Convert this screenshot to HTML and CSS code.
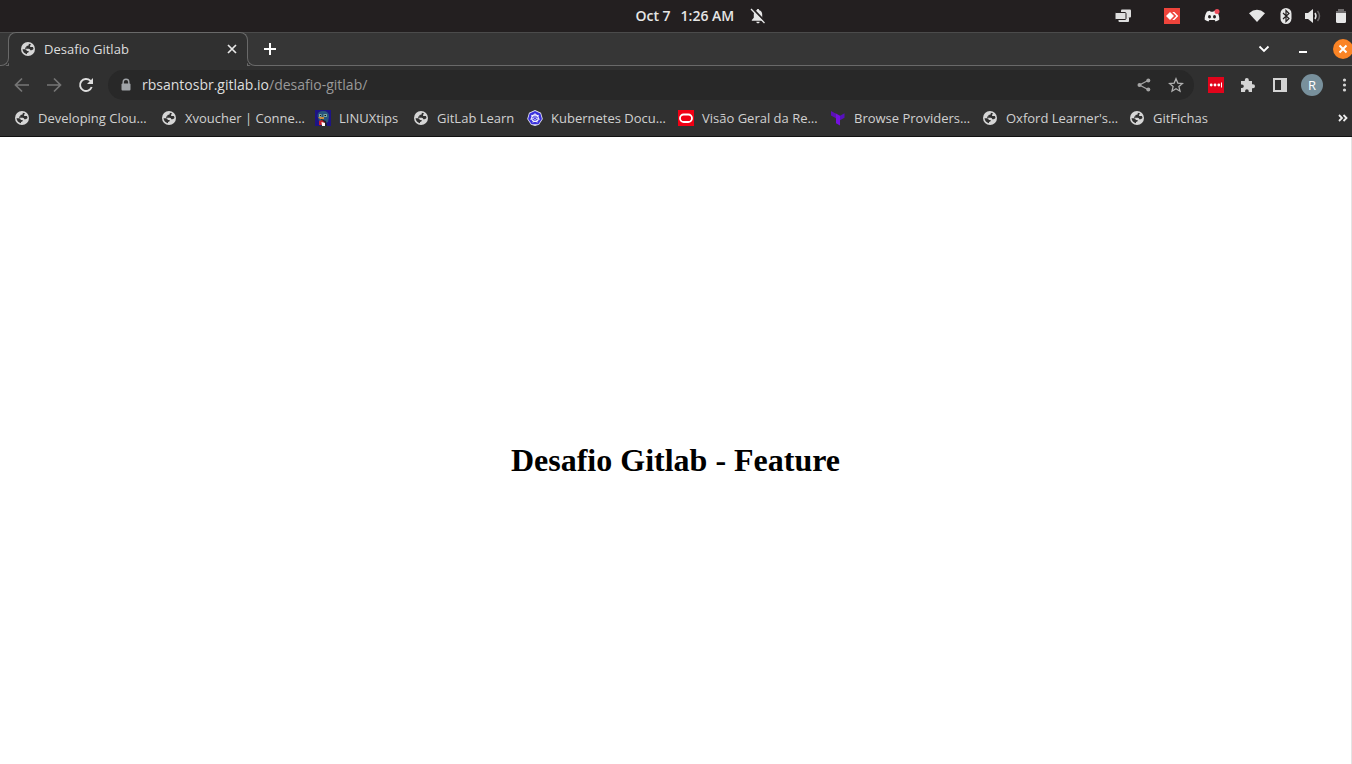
FILE: index.html
```html
<!DOCTYPE html>
<html lang="en">
<head>
<meta charset="utf-8">
<title>Desafio Gitlab</title>
<link rel="stylesheet" href="styles.css">
</head>
<body>
<svg class="symbols" aria-hidden="true">
  <symbol id="globe" viewBox="0 0 16 16">
    <circle cx="8" cy="8" r="7" fill="#d6d6d6"/>
    <path d="M8.800 2.700v.8q0 1.200-1.200 1.300L6.400 5v1.200L5 6.700v1h3.800q1.500 0 1.500 1.500h1.200q1.300-.1 2-1.200-.1-1-.6-2h-2.500q-.7-.6-.2-1.600l.9-.9q-1.100-.7-2.300-.8zM2.500 8.200h2.700q1.600 0 1.600 1.700h2q0 1.900-1.800 2v1.300q-4-.9-4.500-5z" fill="#303030"/>
  </symbol>
</svg>

<header class="desktop-bar">
  <div class="clock">
    <span>Oct 7</span><span>1:26 AM</span>
    <svg class="bell" viewBox="0 0 16 16"><path d="M8 1c.8 0 1.200.5 1.200 1.200 2 .6 3 2 3 4.200v3.400l2 2.200v.8H1.800V12l2-2.200V6.400c0-2.200 1-3.600 3-4.200C6.800 1.500 7.200 1 8 1zM6.300 13.800h3.400c-.3 2-3.100 2-3.400 0z" fill="#e6e6e6"/><path d="m2.500.5 13 13.500" stroke="#231f20" stroke-width="2"/><path d="m1 1 13.500 14" stroke="#e6e6e6" stroke-width="1.300"/></svg>
  </div>
  <div class="tray">
    <svg class="icon windows" viewBox="0 0 16 16"><rect x="6" y="1.500" width="10" height="8" rx="1" fill="#dedede"/><rect x="3.500" y="9" width="10.500" height="5" rx="1" fill="#dedede"/><rect x="0" y="4.500" width="11" height="7" rx="1" fill="#dedede" stroke="#231f20"/></svg>
    <svg class="icon anydesk" viewBox="0 0 16 16"><path d="M0 0h16v16H0z" fill="#ef443b"/><path d="m6 4 4 4-4 4-4-4zM8.300 4h2l4 4-4 4h-2l4-4z" fill="#fff"/></svg>
    <svg class="icon discord" viewBox="0 0 16 16"><path d="M3 3.500 6 2.700l.6 1h2.800l.6-1 3 .8c1.700 2.500 2.500 5.300 2.300 8.300-1.200.9-2.500 1.400-3.800 1.700l-.8-1.500H5.300l-.8 1.500C3.200 13.200 1.900 12.700.7 11.800.5 8.800 1.300 6 3 3.500z" fill="#eee"/><ellipse cx="5.500" cy="8.700" rx="1.500" ry="1.700" fill="#231f20"/><ellipse cx="10.500" cy="8.700" rx="1.500" ry="1.700" fill="#231f20"/><circle cx="13" cy="3.500" r="2.500" fill="#ed4b5b"/></svg>
    <svg class="icon wifi" viewBox="0 0 16 16"><path d="M8 14 0 5.200Q8-1.700 16 5.200z" fill="#e6e6e6"/></svg>
    <svg class="icon bluetooth" viewBox="0 0 16 16"><rect x="2.500" width="11" height="16" rx="5.500" fill="#e6e6e6"/><path d="m5 5 6 5.500L8 13.500v-11l3 3L5 11" fill="none" stroke="#231f20" stroke-width="1.200"/></svg>
    <svg class="icon volume" viewBox="0 0 16 16"><path d="M0 5h3l5-4v14l-5-4H0z" fill="#e6e6e6"/><path d="M10 5q2 3 0 6" fill="none" stroke="#e6e6e6" stroke-width="1.500"/><path d="M12.500 3q4 5 0 10" fill="none" stroke="#686566" stroke-width="1.500"/></svg>
    <svg class="icon battery" viewBox="0 0 16 16"><path d="M5 1h6v2h2v3H3V3h2z" fill="#706d6e"/><path d="M3 5h10v8.500q0 1.500-1.500 1.500h-7Q3 15 3 13.500z" fill="#e6e6e6"/></svg>
  </div>
</header>

<div class="tab-strip">
  <div class="tab">
    <svg class="icon"><use href="#globe"/></svg>
    <span class="tab-title">Desafio Gitlab</span>
    <button class="tab-close" aria-label="Close tab"><svg class="icon" viewBox="0 0 16 16"><path d="m4 4 8 8M12 4l-8 8" stroke="#e8e8e8" stroke-width="1.700"/></svg></button>
  </div>
  <button class="tool new-tab" aria-label="New tab"><svg class="icon" viewBox="0 0 16 16"><path d="M8 2v12M2 8h12" stroke="#fff" stroke-width="2"/></svg></button>
  <div class="window-controls">
    <button aria-label="Search tabs"><svg class="icon" viewBox="0 0 16 16"><path d="m3.500 5.500 4.500 4.500 4.500-4.500" fill="none" stroke="#fff" stroke-width="1.800"/></svg></button>
    <button aria-label="Minimize"><svg class="icon" viewBox="0 0 16 16"><path d="M4 10h8v2H4z" fill="#fff"/></svg></button>
    <button class="window-close" aria-label="Close window"><svg class="close-disc" viewBox="0 0 20 20"><circle cx="10" cy="10" r="10" fill="#fb8425"/><path d="m6.500 6.500 7 7M13.500 6.500l-7 7" stroke="#fff" stroke-width="2"/></svg></button>
  </div>
</div>

<div class="toolbar">
  <button class="tool" aria-label="Back"><svg class="icon" viewBox="0 0 16 16"><path d="M15 8H2M8 1.500 1.500 8 8 14.500" fill="none" stroke="#757575" stroke-width="1.700"/></svg></button>
  <button class="tool" aria-label="Forward"><svg class="icon" viewBox="0 0 16 16"><path d="M1 8h13M8 1.500 14.500 8 8 14.500" fill="none" stroke="#757575" stroke-width="1.700"/></svg></button>
  <button class="tool" aria-label="Reload"><svg class="icon" viewBox="0 0 16 16"><path d="M13.700 10A6 6 0 1 1 12.300 3.700L14 5.500" fill="none" stroke="#dedede" stroke-width="1.900"/><path d="M15 1v6H9z" fill="#dedede"/></svg></button>
  <div class="address">
    <svg class="icon" viewBox="0 0 16 16"><path d="M5.200 7V5a2.800 2.800 0 0 1 5.600 0v2" fill="none" stroke="#a0a4a8" stroke-width="1.400"/><rect x="3.500" y="6.500" width="9" height="7" rx="1" fill="#a0a4a8"/></svg>
    <div class="url" role="textbox" aria-label="Address" contenteditable="true" spellcheck="false">rbsantosbr.gitlab.io<span class="path">/desafio-gitlab/</span></div>
    <button class="tool" aria-label="Share"><svg class="icon" viewBox="0 0 16 16"><path d="m12 3.500-8.500 4.500 8.500 4.500" fill="none" stroke="#a5a5a5" stroke-width="1.300"/><g fill="#a5a5a5"><circle cx="12.300" cy="3.500" r="2"/><circle cx="3.500" cy="8" r="2"/><circle cx="12.300" cy="12.500" r="2"/></g></svg></button>
    <button class="tool" aria-label="Bookmark this page"><svg class="icon" viewBox="0 0 16 16"><path d="m8 1.800 1.800 4.300 4.700.4-3.600 3.100 1.100 4.600-4-2.500-4 2.500 1.100-4.600-3.600-3.100 4.700-.4z" fill="none" stroke="#b0b0b0" stroke-width="1.300"/></svg></button>
  </div>
  <button class="tool" aria-label="Password extension"><svg class="icon" viewBox="0 0 16 16"><path d="M0 0h16v16H0z" fill="#e2041b"/><g fill="#fff"><circle cx="3.200" cy="8" r="1.400"/><circle cx="7" cy="8" r="1.400"/><circle cx="10.800" cy="8" r="1.400"/></g><path d="M13.500 5.500v5" stroke="#fff"/></svg></button>
  <button class="tool" aria-label="Extensions"><svg class="icon" viewBox="0 0 16 16"><path d="M1 4h3.800V3a2 2 0 0 1 4 0v1H12v3.300h1a2 2 0 0 1 0 4h-1V15H8.700v-1a1.800 1.800 0 0 0-3.600 0v1H1v-4h1a1.800 1.800 0 0 0 0-3.600H1z" fill="#d4d4d4"/></svg></button>
  <button class="tool" aria-label="Side panel"><svg class="icon" viewBox="0 0 16 16"><path d="M2 2h12v12H2z" fill="none" stroke="#d4d4d4" stroke-width="2"/><path d="M9 2h5v12H9z" fill="#d4d4d4"/></svg></button>
  <button class="tool" aria-label="Profile"><span class="avatar">R</span></button>
  <button class="menu" aria-label="Menu"><svg class="icon" viewBox="0 0 16 16"><g fill="#d4d4d4"><circle cx="8.500" cy="3" r="1.600"/><circle cx="8.500" cy="8" r="1.600"/><circle cx="8.500" cy="13" r="1.600"/></g></svg></button>
</div>

<nav class="bookmarks" aria-label="Bookmarks">
  <a href="#"><svg class="icon"><use href="#globe"/></svg>Developing Clou…</a>
  <a href="#"><svg class="icon"><use href="#globe"/></svg>Xvoucher | Conne…</a>
  <a href="#"><svg class="icon" viewBox="0 0 16 16"><path d="M0 0h16v16H0z" fill="#1d1485"/><path d="M2.500 6q0-5 5.500-5 6 0 6 5.500L13 12l-4 2-5-3z" fill="#28557c"/><path d="M4 4h2.500v3H4zM8.500 4H12v3H8.500z" fill="#7fa6a0"/><path d="M5 5h1v1H5zM9.500 5h1.500v1H9.500z" fill="#111"/><path d="M3 7h6v2H5z" fill="#c98b3c"/><path d="m6 9 5 2 1 5H6z" fill="#222"/><path d="m4 11 3-1 3 3-3 2H4z" fill="#c6202c"/><path d="m6.500 12 3.500 1v3H7z" fill="#fff"/></svg>LINUXtips</a>
  <a href="#"><svg class="icon"><use href="#globe"/></svg>GitLab Learn</a>
  <a href="#"><svg class="icon" viewBox="0 0 16 16"><path d="m8 0 6 2.800L15.800 9 12 14.800 8 16l-4-1.200L.2 9 2 2.800z" fill="#e4e4f4"/><path d="m8 .9 5.400 2.500L14.900 9l-3.500 5.300H4.600L1.100 9l1.500-5.600z" fill="#3a31dc"/><circle cx="8" cy="8.200" r="3.300" fill="none" stroke="#fff" stroke-width="1.100"/><path d="M8 3v5.200m0 0 4-3.200M8 8.200l5 1.100M8 8.200l2.200 4.500M8 8.200l-2.200 4.500M8 8.200 3 9.300M8 8.200 4 5" stroke="#fff" stroke-width=".7"/><circle cx="8" cy="8.200" r="1" fill="#3a31dc"/></svg>Kubernetes Docu…</a>
  <a href="#"><svg class="icon" viewBox="0 0 16 16"><path d="M0 0h16v16H0z" fill="#f00014"/><rect x="2" y="4.500" width="12" height="7.500" rx="3.700" fill="none" stroke="#fff" stroke-width="1.800"/></svg>Visão Geral da Re…</a>
  <a href="#"><svg class="icon" viewBox="0 0 16 16"><path d="m1 1 4.500 2.500V8L1 5.500z" fill="#5c10b8"/><path d="m5.500 3.200 4.500 2.600v9.700l-4-2.200V8.200l-.5-.3z" fill="#7410e0"/><path d="m10 5.800 4.500-2.500v4.500L10 10.300z" fill="#5610bd"/></svg>Browse Providers…</a>
  <a href="#"><svg class="icon"><use href="#globe"/></svg>Oxford Learner's…</a>
  <a href="#"><svg class="icon"><use href="#globe"/></svg>GitFichas</a>
  <button class="more" aria-label="More bookmarks"><svg class="icon" viewBox="0 0 16 16"><path d="m4 5 3 3-3 3M8.500 5l3 3-3 3" fill="none" stroke="#eee" stroke-width="1.800"/></svg></button>
</nav>

<main class="page"><h1>Desafio Gitlab - Feature</h1></main>
</body>
</html>
```
FILE: styles.css
```css
* { box-sizing: border-box; }

body {
  margin: 0;
  min-height: 100vh;
  display: flex;
  flex-direction: column;
  background: #fff;
  font-family: "Open Sans", "Noto Sans", sans-serif;
  font-size: 13px;
  line-height: 18px;
  color: #dedede;
}

button {
  display: flex;
  align-items: center;
  justify-content: center;
  padding: 0;
  border: 0;
  background: none;
  color: inherit;
  font: inherit;
}

svg { display: block; flex: none; }
.symbols { position: absolute; width: 0; height: 0; }
.icon { width: 16px; height: 16px; }

.desktop-bar {
  display: grid;
  grid-template-columns: 47% 1fr auto;
  align-items: center;
  height: 32px;
  background: #231f20;
}
.clock {
  grid-column: 2;
  display: flex;
  align-items: center;
  gap: 10px;
  font-size: 14px;
  font-weight: 600;
  white-space: nowrap;
  color: #e6e6e6;
}
.bell { width: 16px; height: 16px; margin-left: 6px; }
.tray { display: flex; align-items: center; padding-right: 3px; }
.anydesk { margin-left: 33px; }
.discord { margin-left: 24px; }
.wifi { margin-left: 29px; }
.bluetooth { margin-left: 13px; }
.volume { margin-left: 11px; }
.battery { margin-left: 12px; }

.tab-strip {
  display: flex;
  align-items: center;
  height: 34px;
  padding-left: 8px;
  background: #363636;
  box-shadow: inset 0 1px #4b4b4b, inset 0 -1px #696969;
}
.tab {
  position: relative;
  display: flex;
  align-items: center;
  gap: 8px;
  width: 240px;
  height: 34px;
  padding: 0 7px 2px 11px;
  border: 1px solid #696969;
  border-bottom: 0;
  border-radius: 8px 8px 0 0;
  background: #303030;
}
.tab::before,
.tab::after {
  content: "";
  position: absolute;
  bottom: 0;
  width: 9px;
  height: 9px;
  border-bottom: 1px solid #696969;
  background: #363636;
  box-shadow: 0 0 0 1px #303030;
  clip-path: inset(0);
}
.tab::before { right: 100%; border-right: 1px solid #696969; border-radius: 0 0 8px 0; }
.tab::after { left: 100%; border-left: 1px solid #696969; border-radius: 0 0 0 8px; }
.tab-title { flex: 1; }
.tool { width: 32px; height: 32px; flex: none; }
.new-tab { margin-left: 6px; }
.window-controls { display: flex; align-items: center; gap: 23px; margin-left: auto; overflow: hidden; }
.window-close { width: 19px; margin-left: -1px; justify-content: flex-start; }
.close-disc { width: 20px; height: 20px; }

.toolbar {
  display: flex;
  align-items: center;
  height: 38px;
  padding-left: 6px;
  background: #303030;
}
.address {
  flex: 1;
  display: flex;
  align-items: center;
  height: 30px;
  margin: 0 6px;
  padding: 0 2px 0 10px;
  border-radius: 15px;
  background: #282828;
}
.url {
  flex: 1;
  margin-left: 8px;
  font-size: 14px;
  white-space: nowrap;
  outline: none;
}
.path { color: #999; }
.avatar {
  width: 22px;
  height: 22px;
  border-radius: 50%;
  background: #78909c;
  color: #fff;
  line-height: 22px;
  text-align: center;
}
.menu { width: 16px; margin-left: 8px; }

.bookmarks {
  display: grid;
  grid-template-columns: 147px 154px 98px 114px 151px 152px 152px 147px 1fr auto;
  align-items: center;
  height: 33px;
  padding: 0 1px 5px 14px;
  border-bottom: 1px solid #111;
  background: #303030;
}
.bookmarks a {
  display: flex;
  align-items: center;
  gap: 8px;
  color: #d0d0d0;
  text-decoration: none;
  white-space: nowrap;
}

.page {
  flex: 1;
  display: grid;
  place-items: center;
  padding-top: 20px;
  border-right: 1px solid #e4e4e4;
}
.page h1 {
  margin: 0;
  color: #000;
  font: 700 32px/37px "Liberation Serif", serif;
}
```
